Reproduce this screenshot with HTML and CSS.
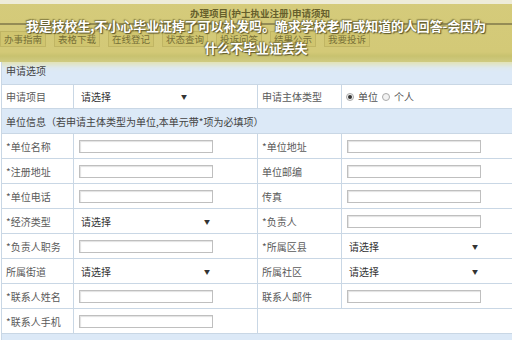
FILE: index.html
```html
<!DOCTYPE html>
<html lang="zh">
<head>
<meta charset="utf-8">
<link rel="stylesheet" href="styles.css">
</head>
<body>
<div class="page">
  <header class="banner">
    <div class="topstrip"></div>
    <h1 class="title">办理项目(护士执业注册)申请须知</h1>
    <div class="rule"></div>
    <nav class="tabs">
      <span class="tab">办事指南</span>
      <span class="tab">表格下载</span>
      <span class="tab">在线登记</span>
      <span class="tab">状态查询</span>
      <span class="tab">投诉问答</span>
      <span class="tab">结果公示</span>
      <span class="tab">我要投诉</span>
    </nav>
  </header>
  <div class="overlay">我是技校生,不小心毕业证掉了可以补发吗。跪求学校老师或知道的人回答-会因为<br>什么不毕业证丢失</div>

  <table class="form">
    <colgroup>
      <col class="c1"><col class="c2"><col class="c3"><col class="c4">
    </colgroup>
    <tr class="sec first"><td colspan="4">申请选项</td></tr>
    <tr class="row r24">
      <td class="lbl">申请项目</td>
      <td><div class="sel narrow"><span>请选择</span><span class="arr">▼</span></div></td>
      <td class="lbl">申请主体类型</td>
      <td><div class="radios"><span class="radio on"></span><span>单位</span><span class="radio"></span><span>个人</span></div></td>
    </tr>
    <tr class="sec"><td colspan="4">单位信息（若申请主体类型为单位,本单元带*项为必填项）</td></tr>
    <tr class="row">
      <td class="lbl">*单位名称</td><td><div class="inp"></div></td>
      <td class="lbl">*单位地址</td><td><div class="inp"></div></td>
    </tr>
    <tr class="row">
      <td class="lbl">*注册地址</td><td><div class="inp"></div></td>
      <td class="lbl">单位邮编</td><td><div class="inp"></div></td>
    </tr>
    <tr class="row">
      <td class="lbl">*单位电话</td><td><div class="inp"></div></td>
      <td class="lbl">传真</td><td><div class="inp"></div></td>
    </tr>
    <tr class="row">
      <td class="lbl">*经济类型</td>
      <td><div class="sel"><span>请选择</span><span class="arr">▼</span></div></td>
      <td class="lbl">*负责人</td><td><div class="inp"></div></td>
    </tr>
    <tr class="row">
      <td class="lbl">*负责人职务</td><td><div class="inp"></div></td>
      <td class="lbl">*所属区县</td>
      <td><div class="sel"><span>请选择</span><span class="arr">▼</span></div></td>
    </tr>
    <tr class="row">
      <td class="lbl">所属街道</td>
      <td><div class="sel"><span>请选择</span><span class="arr">▼</span></div></td>
      <td class="lbl">所属社区</td>
      <td><div class="sel"><span>请选择</span><span class="arr">▼</span></div></td>
    </tr>
    <tr class="row">
      <td class="lbl">*联系人姓名</td><td><div class="inp"></div></td>
      <td class="lbl">联系人邮件</td><td><div class="inp"></div></td>
    </tr>
    <tr class="row">
      <td class="lbl">*联系人手机</td><td><div class="inp"></div></td>
      <td class="blank" colspan="2"></td>
    </tr>
    <tr class="sec last"><td colspan="4"></td></tr>
  </table>
</div>
</body>
</html>
```

FILE: styles.css
```css
html, body {
  margin: 0;
  padding: 0;
  background: #fff;
}
body {
  font-family: "Noto Sans CJK SC", "Noto Sans", sans-serif;
  width: 512px;
  height: 340px;
  overflow: hidden;
}
.page {
  position: relative;
  width: 512px;
}
.banner {
  height: 62px;
  background: linear-gradient(#d5cb7b 0, #d3c977 52px, #c8c26f 56px, #cfcb82 62px);
  display: flex;
  flex-direction: column;
}
.topstrip {
  height: 4px;
  background: #eeecd9;
}
.title {
  margin: 3px 0 0;
  font-size: 9.5px;
  line-height: 12px;
  font-weight: 700;
  color: #665f2c;
  text-align: center;
  padding-left: 8px;
}
.rule {
  margin-top: 4px;
  height: 2px;
  background: #948c55;
}
.tabs {
  margin-top: 6px;
  display: flex;
  gap: 8px;
  padding-left: 0;
}
.tab {
  width: 46px;
  height: 16px;
  box-sizing: border-box;
  border: 1px solid #c0b563;
  background: #d0c56f;
  color: #777038;
  font-size: 9.5px;
  line-height: 14px;
  text-align: center;
}
.overlay {
  position: absolute;
  left: 16px;
  top: 15px;
  width: 480px;
  text-align: center;
  color: #fff;
  font-weight: 700;
  font-size: 12.9px;
  line-height: 22px;
  text-shadow: 0 0 2px #6b6532, 1px 1px 1px #5a5428, -1px -1px 1px #8a8346;
}
.form {
  margin-left: 1px;
  width: 511px;
  border-collapse: collapse;
  table-layout: fixed;
  font-size: 10px;
  color: #555;
}
.c1 { width: 72px; }
.c2 { width: 184px; }
.c3 { width: 84px; }
.c4 { width: 171px; }
.form td {
  border: 1px solid #c9d7e5;
  padding: 0;
  vertical-align: middle;
}
.sec td {
  background: #dce9f7;
  color: #444;
  padding-left: 4px;
  height: 24px;
}
.sec.first td {
  height: 21px;
  vertical-align: top;
  padding-top: 1px;
  background: linear-gradient(#e2e2b6 0, #dde8ef 6px, #dce9f7 10px);
  border-top: none;
}
.sec.last td {
  height: 10px;
}
.row td {
  height: 24px;
  background: #fff;
}
.row.r24 td {
  height: 23px;
}
.lbl {
  padding-left: 4px !important;
  color: #5a5a5a;
  white-space: nowrap;
}
.inp {
  margin-left: 5px;
  width: 134px;
  height: 13px;
  box-sizing: border-box;
  border: 1px solid #bfbfbf;
  background: #fff;
  box-shadow: inset 1px 1px 1px #e2e2e2;
}
.sel {
  margin-left: 7px;
  width: 129px;
  display: flex;
  justify-content: space-between;
  align-items: center;
  color: #333;
}
.sel.narrow {
  width: 106px;
}
.arr {
  font-size: 6px;
  color: #333;
}
.radios {
  margin-left: 4px;
  display: flex;
  align-items: center;
  gap: 4px;
  color: #555;
}
.radio {
  width: 6px;
  height: 6px;
  border: 1px solid #aaa;
  border-radius: 50%;
  background: #f2f2f2;
  position: relative;
}
.radio.on::after {
  content: "";
  position: absolute;
  left: 1px;
  top: 1px;
  width: 4px;
  height: 4px;
  border-radius: 50%;
  background: #333;
}
.form td.blank {
  border-right: none;
  border-bottom: none;
}
```
